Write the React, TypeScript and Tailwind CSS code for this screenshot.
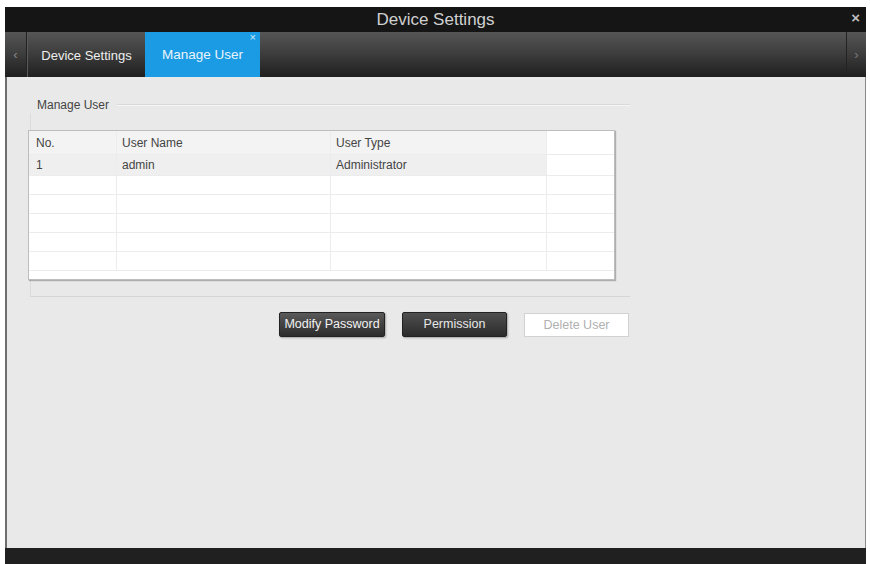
import React from "react";

const font = { fontFamily: '"Liberation Sans", Arial, sans-serif' };

function Row({ cells, bg, h }: { cells: string[]; bg: string; h: string }) {
  return (
    <div className={`flex ${h} border-b border-[#ececec]`}>
      <div className={`w-[88px] ${bg} border-r border-[#ececec] pl-[7px] flex items-center`}>{cells[0]}</div>
      <div className={`w-[214px] ${bg} border-r border-[#ececec] pl-[5px] flex items-center`}>{cells[1]}</div>
      <div className={`w-[216px] ${bg} border-r border-[#ececec] pl-[5px] flex items-center`}>{cells[2]}</div>
      <div className="w-[58px] bg-white"></div>
    </div>
  );
}

export default function App() {
  return (
    <div className="w-[870px] h-[564px] bg-white overflow-hidden" style={font}>
      <div className="ml-[5px] mt-[7px] w-[861px] h-[557px] flex flex-col">
        {/* title bar */}
        <div className="relative h-[25px] bg-[#151515] flex items-center justify-center">
          <span className="text-[17px] text-[#d0d0d0]">Device Settings</span>
          <span className="absolute right-[6px] top-[3px] text-[15px] leading-none text-[#bdbdbd] font-bold">×</span>
        </div>
        {/* tab bar */}
        <div className="h-[45px] flex bg-gradient-to-b from-[#565656] via-[#3c3c3c] to-[#1f1f1f]">
          <div className="w-[22px] border-r border-[#222] flex items-center justify-center text-[#8a8a8a] text-[13px]">‹</div>
          <div className="w-[118px] border-l border-[#5a5a5a] flex items-center justify-center text-[13px] text-[#eeeeee] pt-[2px]">
            Device Settings
          </div>
          <div className="relative w-[115px] bg-[#1b9be3] flex items-center justify-center text-[13.5px] text-[#e8f4fc] pt-[2px]">
            Manage User
            <span className="absolute right-[4px] top-[0px] text-[11px] leading-none text-[#cfe9fa]">×</span>
          </div>
          <div className="flex-1"></div>
          <div className="w-[20px] border-l border-[#222] flex items-center justify-center text-[#7a7a7a] text-[13px]">›</div>
        </div>
        {/* content */}
        <div className="flex-1 bg-[#e9e9e9] border-l-[2px] border-l-[#6e6e6e] border-r border-r-[#8a8a8a]">
          <div className="ml-[21px] mt-[20px] w-[602px]">
            <div className="flex items-center h-[16px]">
              <span className="ml-[9px] text-[12px] text-[#444]">Manage User</span>
              <div className="flex-1 ml-[8px] border-t border-[#d9d9d9] border-b border-b-[#f6f6f6]"></div>
            </div>
            <div className="ml-[2px] border-l border-[#dcdcdc] border-b border-b-[#d6d6d6] pb-[16px]">
              <div className="h-[17px]"></div>
              <div className="-ml-[3px] w-[587px] h-[150px] bg-white border border-[#bdbdbd] shadow-[1px_1px_1px_rgba(0,0,0,0.25)] text-[12px] text-[#444]">
                <Row cells={["No.", "User Name", "User Type"]} bg="bg-[#f3f3f3]" h="h-[24px]" />
                <Row cells={["1", "admin", "Administrator"]} bg="bg-[#efefef]" h="h-[21px]" />
                <Row cells={["", "", ""]} bg="bg-white" h="h-[19px]" />
                <Row cells={["", "", ""]} bg="bg-white" h="h-[19px]" />
                <Row cells={["", "", ""]} bg="bg-white" h="h-[19px]" />
                <Row cells={["", "", ""]} bg="bg-white" h="h-[19px]" />
                <Row cells={["", "", ""]} bg="bg-white" h="h-[19px]" />
              </div>
            </div>
          </div>
          <div className="flex mt-[15px] ml-[272px] gap-[17px] text-[12.5px]">
            <div className="w-[106px] h-[25px] rounded-[2px] bg-gradient-to-b from-[#5a5a5a] to-[#2c2c2c] border border-[#222] shadow-[1px_1px_2px_rgba(0,0,0,0.3)] flex items-center justify-center text-[#f2f2f2] whitespace-nowrap">
              Modify Password
            </div>
            <div className="w-[105px] h-[25px] rounded-[2px] bg-gradient-to-b from-[#4f4f4f] to-[#2c2c2c] border border-[#222] shadow-[1px_1px_2px_rgba(0,0,0,0.3)] flex items-center justify-center text-[#e8e8e8]">
              Permission
            </div>
            <div className="w-[105px] h-[24px] mt-[1px] bg-white border border-[#d2d2d2] flex items-center justify-center text-[#b0b0b0] text-[12.5px]">
              Delete User
            </div>
          </div>
        </div>
        {/* bottom bar */}
        <div className="h-[16px] bg-[#202020]"></div>
      </div>
    </div>
  );
}
